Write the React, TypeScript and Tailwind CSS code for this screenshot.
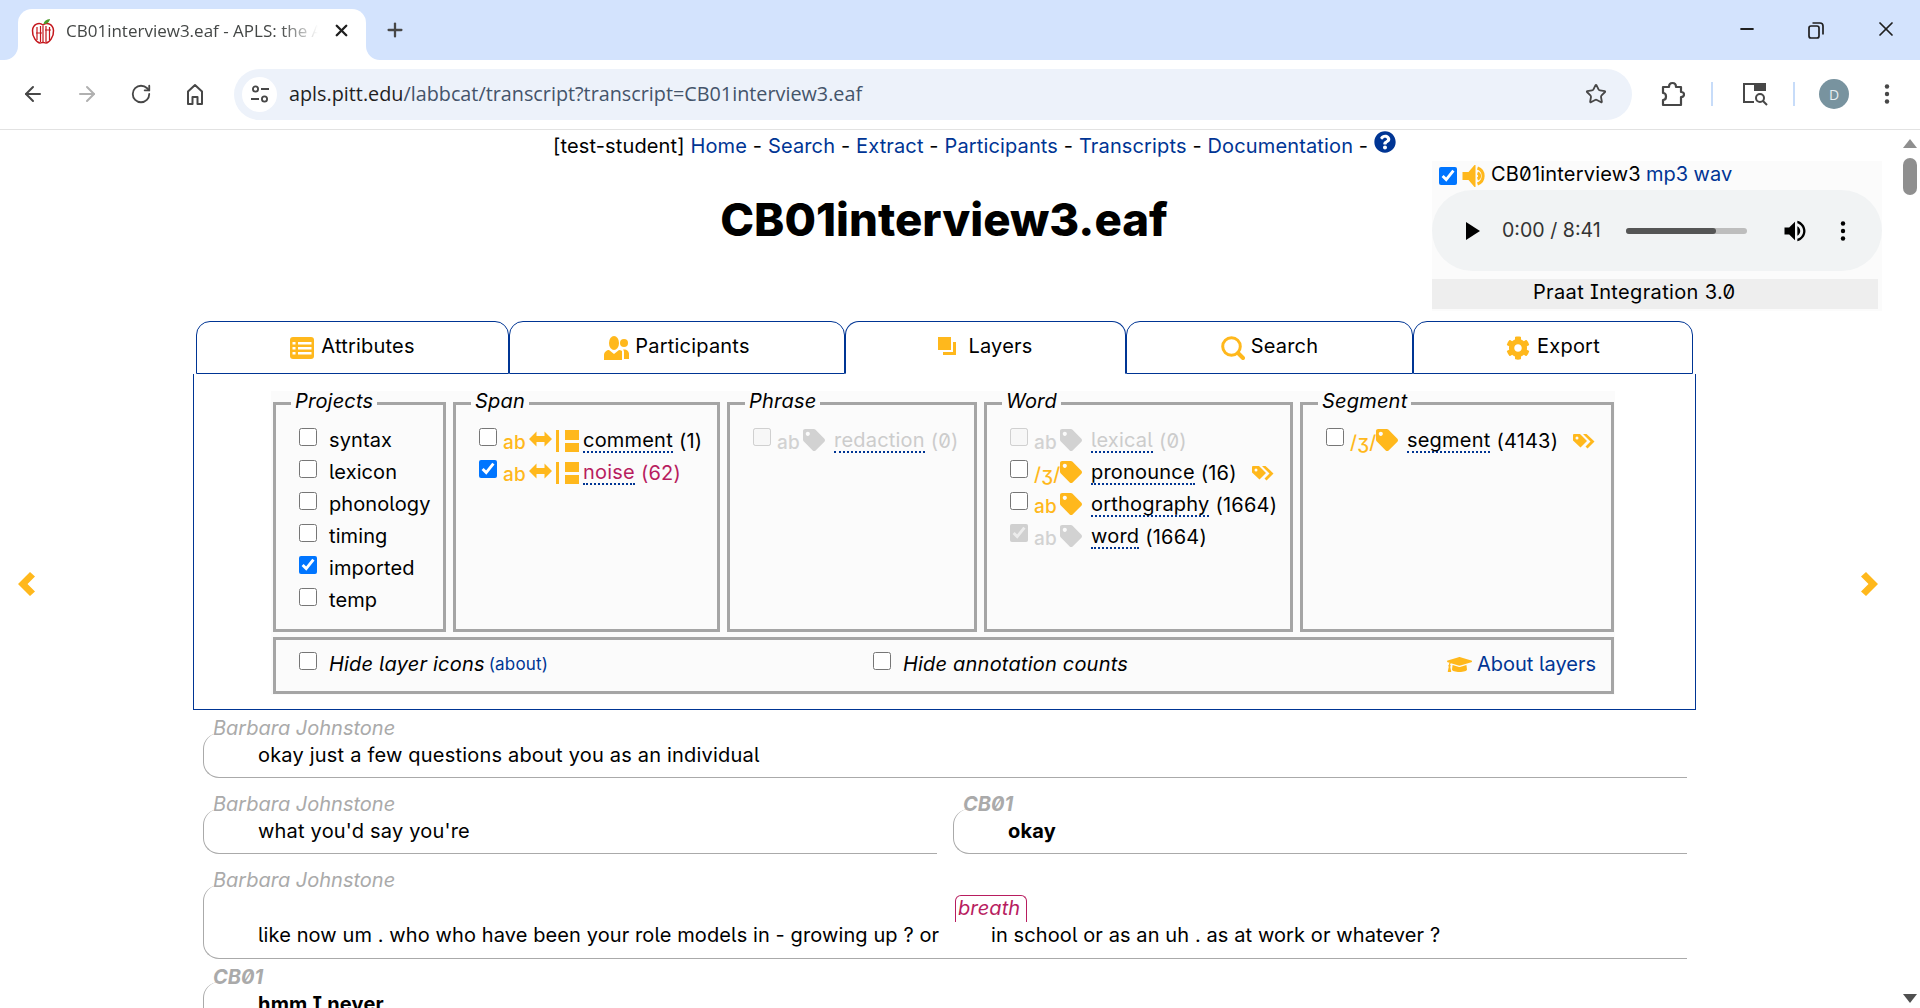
import { ArrowLeft, ArrowRight, Minus, Plus, RotateCw, Star, X } from "lucide-react";
import { FaCog, FaGraduationCap, FaQuestionCircle, FaTag } from "react-icons/fa";
import type { ReactNode } from "react";

const chromeFont = "font-['Open_Sans',sans-serif]";

function Dots({ className }: { className: string }) {
  return (
    <svg width="6" height="24" viewBox="0 0 6 24" className={className}>
      <circle cx="3" cy="4.5" r="2.2" />
      <circle cx="3" cy="12" r="2.2" />
      <circle cx="3" cy="19.5" r="2.2" />
    </svg>
  );
}

function Favicon() {
  return (
    <svg width="24" height="26" viewBox="0 0 24 26" fill="none" stroke="#c4161c" strokeWidth="1.5">
      <path d="M12 7C8 4 2 6 1.5 12.5 1 19 6 25 9 25c1.5 0 2-.6 3-.6s1.500.6 3 .6c3 0 8-6 7.500-12.500C22 6 16 4 12 7Z" />
      <path d="M6 9v13M9.500 8v16M12 8v16M15 8v16M18.500 9v13M5 15h6M14 12h6" strokeWidth="1.200" />
      <path d="M12.500 6C13 3 15.500 1.500 19 1c-.5 3-3 5-6.500 5Z" fill="#4c9a2a" stroke="none" />
    </svg>
  );
}

function BrowserChrome() {
  return (
    <div className={`shrink-0 ${chromeFont}`}>
      <div className="flex h-[60px] bg-[#d3e3fd]">
        <div className="relative ml-[18px] mt-[9px] flex h-[51px] w-[348px] rounded-t-[14px] bg-white">
          <svg width="14" height="14" viewBox="0 0 14 14" className="absolute bottom-0 left-[-14px]" fill="#fff">
            <path d="M14 0V14H0A14 14 0 0 0 14 0Z" />
          </svg>
          <svg width="14" height="14" viewBox="0 0 14 14" className="absolute bottom-0 right-[-14px]" fill="#fff">
            <path d="M0 0V14H14A14 14 0 0 1 0 0Z" />
          </svg>
          <div className="ml-[13px] mt-[9px] h-[26px]">
            <Favicon />
          </div>
          <div className="ml-[11px] mt-[11px] w-[252px] overflow-hidden whitespace-nowrap text-[17px] leading-[22px] text-[#444746] [mask-image:linear-gradient(to_right,black_85%,transparent)]">
            CB01interview3.eaf - APLS: the Archive
          </div>
          <X size={19} strokeWidth={3} className="ml-[14px] mt-[12px] text-[#1f1f1f]" />
        </div>
        <Plus size={22} strokeWidth={2.5} className="ml-[18px] mt-[19px] text-[#474747]" />
        <div className="ml-auto flex">
          <Minus size={20} strokeWidth={2.500} className="mr-[50px] mt-[19px] text-[#1f1f1f]" />
          <svg width="18" height="18" viewBox="0 0 18 18" fill="none" stroke="#1f1f1f" strokeWidth="1.700" className="mr-[49px] mt-[21px]">
            <rect x="2" y="5" width="10" height="12" rx="2" />
            <path d="M5.500 2H13a3 3 0 0 1 3 3v8.500" />
          </svg>
          <X size={24} strokeWidth={1.700} className="mr-[22px] mt-[17px] text-[#1f1f1f]" />
        </div>
      </div>
      <div className="flex h-[70px] items-center rounded-tl-[12px] rounded-tr-[12px] border-b border-[#e2e2e2] bg-white pb-[1px] pl-[6px] text-[#474747]">
        <div className="flex w-[54px] justify-center"><ArrowLeft size={24} strokeWidth={2} /></div>
        <div className="flex w-[54px] justify-center"><ArrowRight size={24} strokeWidth={2} className="text-[#b0b0b0]" /></div>
        <div className="flex w-[54px] justify-center"><RotateCw size={22} strokeWidth={2} /></div>
        <div className="flex w-[54px] justify-center">
          <svg width="24" height="24" viewBox="0 0 24 24" fill="none" stroke="#474747" strokeWidth="2" strokeLinejoin="round">
            <path d="M5 22V9.500L12 3l7 6.500V22h-4.500v-7h-5v7Z" />
          </svg>
        </div>
        <div className="ml-[12px] flex h-[51px] w-[1398px] items-center rounded-full bg-[#edf2fa]">
          <div className="ml-[8px] flex h-[35px] w-[35px] items-center justify-center rounded-full bg-white">
            <svg width="20" height="20" viewBox="0 0 20 20" fill="none" stroke="#474747" strokeWidth="1.800">
              <circle cx="5.500" cy="5" r="2.600" />
              <path d="M11 5h8M1 15h8" />
              <circle cx="14.500" cy="15" r="2.600" />
            </svg>
          </div>
          <div className="ml-[12px] whitespace-nowrap text-[19.8px] text-[#1f1f1f]">
            apls.pitt.edu<span className="text-[#44546a]">/labbcat/transcript?transcript=CB01interview3.eaf</span>
          </div>
          <Star size={22} strokeWidth={2} className="ml-auto mr-[25px]" />
        </div>
        <svg width="24" height="26" viewBox="0 0 24 26" fill="none" stroke="#474747" strokeWidth="2.200" strokeLinejoin="round" className="ml-[29px]">
          <path d="M2 6h6c0-2.500 1.300-4 3.500-4S15 3.500 15 6h5v5c2 0 3 1 3 2.500S22 16 20 16v8H2v-5c2 0 3-1.500 3-3.500S4 12 2 12Z" />
        </svg>
        <div className="ml-[26px] h-[24px] w-[2px] bg-[#c7dcf9]" />
        <svg width="26" height="26" viewBox="0 0 26 26" fill="none" stroke="#474747" strokeWidth="2" className="ml-[29px]">
          <path d="M12 21H2V3h21v7" />
          <path d="M13 3h10v6H13Z" fill="#474747" />
          <circle cx="18" cy="17" r="4" />
          <path d="m21 20 4 4" />
        </svg>
        <div className="ml-[25px] h-[24px] w-[2px] bg-[#c7dcf9]" />
        <div className="ml-[24px] flex h-[30px] w-[30px] items-center justify-center rounded-full bg-[#78939f] text-[14px] text-[#e6eef2]">D</div>
        <Dots className="ml-[35px] fill-[#474747]" />
      </div>
    </div>
  );
}

function NavLink({ children }: { children: ReactNode }) {
  return <span className="text-[#003594]">{children}</span>;
}

function TopNav() {
  return (
    <div className="flex h-[30px] items-center whitespace-nowrap pl-[553px] pt-[1px] text-[20px] tracking-[0.14px]">
      <span>
        [test-student] <NavLink>Home</NavLink> - <NavLink>Search</NavLink> - <NavLink>Extract</NavLink> -{" "}
        <NavLink>Participants</NavLink> - <NavLink>Transcripts</NavLink> - <NavLink>Documentation</NavLink> -
      </span>
      <FaQuestionCircle size={22} className="mb-[8px] ml-[6px] text-[#003594]" />
    </div>
  );
}

function AudioPanel() {
  return (
    <div className="absolute left-[1432px] top-[31px] w-[450px] bg-[#fbfbfb] pb-[2px] text-[20px]">
      <div className="flex h-[29px] items-center pb-[4px] pl-[7px]">
        <input type="checkbox" checked readOnly className="mt-[4px] h-[18px] w-[18px] accent-[#0075ff]" />
        <svg width="26" height="24" viewBox="0 0 25 24" className="ml-[5px] mt-[4px]">
          <path d="M0 8h6l6-7h1v22h-1l-6-7H0Z" fill="#ffb81c" />
          <path d="M15 4a8.500 8.500 0 0 1 0 16M15 9a3.200 3.200 0 0 1 0 6" fill="none" stroke="#ffb81c" strokeWidth="3" />
        </svg>
        <span className="ml-[3px]">CB01interview3</span>
        <span className="ml-[5px] tracking-normal text-[#003594]">mp3 wav</span>
      </div>
      <div className="flex h-[81px] items-center rounded-full bg-[#f1f3f4] text-[#333]">
        <svg width="18" height="20" viewBox="0 0 18 20" className="ml-[32px]">
          <path d="M2 1 16 10 2 19Z" fill="#000" />
        </svg>
        <span className="ml-[20px] whitespace-nowrap text-[19.6px] tracking-normal [font-feature-settings:normal]">0:00 / 8:41</span>
        <div className="ml-[25px] h-[6px] w-[121px] rounded-full bg-[#bdbdbd]">
          <div className="h-[6px] w-[90px] rounded-full bg-[#555]" />
        </div>
        <svg width="28" height="28" viewBox="0 0 24 24" className="ml-[34px] fill-black">
          <path d="M3 9v6h4l5 5V4L7 9H3zm13.500 3c0-1.770-1.020-3.290-2.500-4.030v8.050c1.480-.73 2.500-2.250 2.500-4.020zM14 3.230v2.060c2.890.86 5 3.540 5 6.710s-2.110 5.850-5 6.710v2.060c4.010-.91 7-4.490 7-8.770s-2.990-7.860-7-8.770z" />
        </svg>
        <Dots className="ml-[31px] fill-black" />
      </div>
      <div className="mt-[8px] flex h-[30px] w-[446px] items-center bg-[#eeeeee] pb-[5px] pl-[101px] tracking-[0.35px]">Praat Integration 3.0</div>
    </div>
  );
}

function TableIcon() {
  return (
    <svg width="24" height="22" viewBox="0 0 24 22">
      <rect width="24" height="22" rx="3" fill="#ffb81c" />
      <path d="M2.500 5h3v2.500h-3zM2.500 10h3v2.500h-3zM2.500 15h3v2.500h-3zM8 5h13.500v2.500H8zM8 10h13.500v2.500H8zM8 15h13.500v2.500H8z" fill="#fff" />
    </svg>
  );
}

function PeopleIcon() {
  return (
    <svg width="25" height="24" viewBox="0 0 25 24" fill="#ffb81c">
      <ellipse cx="10" cy="7" rx="5" ry="7" />
      <path d="M0 24v-5c0-3 3-5 5-5l5 4 5-4c1 0 2 .5 3 1v9Z" />
      <circle cx="20" cy="7" r="4" />
      <path d="M20 13.500c3 0 5 2 5 4.500v5h-5v-7c0-1-.5-2-1-2.500Z" />
    </svg>
  );
}

function LayersIcon() {
  return (
    <svg width="18" height="18" viewBox="0 0 18 18" fill="#ffb81c">
      <rect width="13" height="13" />
      <path d="M15 5h3v13H5v-3h10z" />
    </svg>
  );
}

function SearchIcon() {
  return (
    <svg width="24" height="24" viewBox="0 0 24 24" fill="none" stroke="#ffb81c">
      <circle cx="10.500" cy="10.500" r="8.800" strokeWidth="3" />
      <path d="m17 17 5 5" strokeWidth="4" strokeLinecap="round" />
    </svg>
  );
}

const tabs = [
  { label: "Attributes", icon: <TableIcon />, width: "w-[313px]", gap: "gap-[7px]", shift: "mt-[3px]" },
  { label: "Participants", icon: <PeopleIcon />, width: "w-[336px]", gap: "gap-[6px]", shift: "mt-[3px]" },
  { label: "Layers", icon: <LayersIcon />, width: "w-[281px]", gap: "gap-[12px]", shift: "", active: true },
  { label: "Search", icon: <SearchIcon />, width: "w-[287px]", gap: "gap-[6px]", shift: "mt-[3px]" },
  { label: "Export", icon: <FaCog size={24} className="text-[#ffb81c]" />, width: "w-[280px]", gap: "gap-[7px]", shift: "mt-[3px]" },
];

function Tabs() {
  return (
    <div className="ml-[196px] flex">
      {tabs.map((tab) => (
        <div
          key={tab.label}
          className={`flex h-[53px] items-center justify-center rounded-t-[14px] border-x-[1.5px] border-t-[1.5px] border-[#003594] pb-[3px] text-[20px] ${tab.gap} ${tab.width} ${
            tab.active ? "border-b-[1.5px] border-b-white" : "border-b-[1.5px]"
          }`}
        >
          <span className={tab.shift}>{tab.icon}</span>
          {tab.label}
        </div>
      ))}
    </div>
  );
}

function SpanIcons() {
  return (
    <>
      <svg width="23" height="16" viewBox="0 0 23 16" fill="currentColor" className="ml-[4px] mt-[-4px]">
        <path d="M0 8 7.500 .5V5h8V.5L23 8l-7.500 7.500V11h-8v4.500Z" />
      </svg>
      <span className="ml-[4px] h-[22px] w-[3px] bg-[#ffb81c]" />
      <span className="ml-[6px] flex h-[22px] w-[14px] flex-col justify-between">
        <span className="h-[10px] bg-[#ffb81c]" />
        <span className="h-[9px] bg-[#ffb81c]" />
      </span>
    </>
  );
}

function PairedTags() {
  return (
    <svg width="23" height="16" viewBox="0 0 23 16" fill="#ffb81c" className="ml-[14px] mb-[1px]">
      <path d="M1 2a1 1 0 0 1 1-1h6l7 7-6.500 6.500L1 7.500Z" />
      <circle cx="5" cy="5" r="1.500" fill="#fbfbfb" />
      <path d="M11 1h3.500l8 7.500-7 7-2-2 5-5Z" />
    </svg>
  );
}

interface LayerRowProps {
  marker?: string;
  kind?: "span" | "tag";
  label: string;
  count: string;
  checked?: boolean;
  off?: boolean;
  dimIcons?: boolean;
  pink?: boolean;
  paired?: boolean;
}

function LayerRow({ marker = "ab", kind = "tag", label, count, checked, off, dimIcons, pink, paired }: LayerRowProps) {
  const textColor = off ? "text-[#cccccc]" : pink ? "text-[#b81d5f]" : "text-black";
  const iconColor = off || dimIcons ? "text-[#d2d2d2]" : "text-[#ffb81c]";
  return (
    <div className={`flex h-[32px] items-center whitespace-nowrap text-[20px] ${textColor}`}>
      <input type="checkbox" checked={checked} disabled={off || dimIcons} readOnly className="mb-[8px] h-[18px] w-[18px] shrink-0 accent-[#0075ff]" />
      <div className={`flex items-center ${iconColor}`}>
        <span className="ml-[6px] mt-[5px] w-[22px] text-[19px] font-medium">{marker}</span>
        {kind === "span" ? <SpanIcons /> : <FaTag size={22} className="ml-[4px] mt-[-2px]" />}
      </div>
      <span className={`${kind === "span" ? "ml-[4px]" : "ml-[9px]"} border-b-2 border-dotted border-[#003594] leading-[21px]`}>{label}</span>
      <span className="ml-[6px] mb-[1px]">({count})</span>
      {paired && <PairedTags />}
    </div>
  );
}

function Group({ title, children }: { title: string; children: ReactNode }) {
  return (
    <fieldset className="h-[241px] min-w-0 border-[3px] border-[#a5a5a5] pl-[23px]">
      <legend className="ml-[-8px] h-[24px] px-[4px] text-[20px] italic leading-[21px]">{title}</legend>
      <div className="pt-[10px]">{children}</div>
    </fieldset>
  );
}

function LayersPanel() {
  return (
    <div className="ml-[193px] h-[336px] w-[1503px] border-x-[1.5px] border-b-[1.5px] border-[#003594] pt-[17px]">
      <div className="ml-[77px] w-[1344px] bg-[#fbfbfb] pb-[1px] pl-[2px]">
        <div className="grid grid-cols-[173px_267px_250px_309px_314px] gap-[7px]">
          <Group title="Projects">
            <div className="-mt-[1px] tracking-[0.1px]">
              {["syntax", "lexicon", "phonology", "timing", "imported", "temp"].map((project) => (
                <label key={project} className="flex h-[32px] items-center text-[20px]">
                  <input type="checkbox" checked={project === "imported"} readOnly className="mb-[6px] h-[18px] w-[18px] accent-[#0075ff]" />
                  <span className="ml-[12px]">{project}</span>
                </label>
              ))}
            </div>
          </Group>
          <Group title="Span">
            <LayerRow kind="span" label="comment" count="1" />
            <LayerRow kind="span" label="noise" count="62" checked pink />
          </Group>
          <Group title="Phrase">
            <LayerRow label="redaction" count="0" off />
          </Group>
          <Group title="Word">
            <LayerRow label="lexical" count="0" off />
            <LayerRow marker="/ʒ/" label="pronounce" count="16" paired />
            <LayerRow label="orthography" count="1664" />
            <LayerRow label="word" count="1664" checked dimIcons />
          </Group>
          <Group title="Segment">
            <LayerRow marker="/ʒ/" label="segment" count="4143" paired />
          </Group>
        </div>
        <div className="mt-[5px] flex h-[57px] w-[1341px] items-center border-[3px] border-[#a5a5a5] pb-[4px] pl-[23px] pr-[15px] text-[20px]">
          <div className="flex w-[574px] items-center">
            <input type="checkbox" readOnly className="mb-[6px] h-[18px] w-[18px]" />
            <span className="ml-[12px] italic">Hide layer icons</span>
            <span className="ml-[4px] mt-[2px] text-[17px] text-[#003594]">(about)</span>
          </div>
          <input type="checkbox" readOnly className="mb-[6px] h-[18px] w-[18px]" />
          <span className="ml-[12px] italic">Hide annotation counts</span>
          <span className="ml-auto flex items-center gap-[5px] tracking-normal text-[#003594]">
            <FaGraduationCap size={25} className="mt-[2px] text-[#ffb81c]" />
            About layers
          </span>
        </div>
      </div>
    </div>
  );
}

function Speaker({ name, bold }: { name: string; bold?: boolean }) {
  return (
    <div className={`h-[24px] pl-[10px] text-[20px] italic leading-[24px] tracking-normal text-[#aaaaaa] ${bold ? "font-bold" : ""}`}>
      {name}
    </div>
  );
}

function Turn({ name, bold, text }: { name: string; bold?: boolean; text: string }) {
  return (
    <div className="w-full">
      <Speaker name={name} bold={bold} />
      <div className="relative z-[-1] -mt-[7px] h-[45px] rounded-l-[16px] border-b-[1.5px] border-l-[1.5px] border-[#aaaaaa] pl-[54px] pt-[10px] text-[20px] leading-[24px]">
        <span className={bold ? "font-bold" : ""}>{text}</span>
      </div>
    </div>
  );
}

function Transcript() {
  return (
    <div className="relative z-0 ml-[203px] w-[1484px]">
      <div className="mt-[6px]">
        <Turn name="Barbara Johnstone" text="okay just a few questions about you as an individual" />
      </div>
      <div className="mt-[14px] flex gap-[16px]">
        <div className="w-[734px]">
          <Turn name="Barbara Johnstone" text="what you'd say you're" />
        </div>
        <div className="w-[734px]">
          <Turn name="CB01" bold text="okay" />
        </div>
      </div>
      <div className="mt-[14px]">
        <Speaker name="Barbara Johnstone" />
        <div className="relative z-[-1] -mt-[7px] flex h-[74px] items-end rounded-l-[16px] border-b-[1.5px] border-l-[1.5px] border-[#aaaaaa] pb-[11px] pl-[54px] text-[20px] leading-[24px] tracking-[0.1px]">
          <span className="w-[697px] whitespace-nowrap">like now um . who who have been your role models in - growing up ? or</span>
          <div>
            <div className="mb-[1px] h-[27px] w-[72px] rounded-t-[6px] border-x border-t border-[#b81d5f] pl-[2px] italic leading-[25px] text-[#b81d5f]">breath</div>
            <div className="whitespace-nowrap pl-[36px]">in school or as an uh . as at work or whatever ?</div>
          </div>
        </div>
      </div>
      <div className="mt-[6px]">
        <Turn name="CB01" bold text="hmm I never" />
      </div>
    </div>
  );
}

function Chevron({ flip }: { flip?: boolean }) {
  return (
    <svg width="17" height="24" viewBox="0 0 17 24" fill="#ffb81c" className={flip ? "rotate-180" : ""}>
      <path d="M5 0 17 12 5 24 0 19.500 7.500 12 0 4.500Z" />
    </svg>
  );
}

function Scrollbar() {
  return (
    <div className="flex w-[20px] shrink-0 flex-col items-center pt-[9px]">
      <svg width="14" height="9" viewBox="0 0 14 9">
        <path d="M7 0 14 9H0Z" fill="#8f8f8f" />
      </svg>
      <div className="mt-[10px] h-[37px] w-[14px] rounded-full bg-[#8f8f8f]" />
      <svg width="14" height="9" viewBox="0 0 14 9" className="mt-auto mb-[5px]">
        <path d="M0 0H14L7 9Z" fill="#505050" />
      </svg>
    </div>
  );
}

export default function App() {
  return (
    <div className="flex h-[1008px] w-[1920px] flex-col overflow-hidden bg-white font-['Inter',sans-serif] text-black">
      <BrowserChrome />
      <div className="flex min-h-0 flex-1">
        <div className="relative min-w-0 flex-1 overflow-hidden tracking-[0.2px] [font-feature-settings:'ss02']">
          <TopNav />
          <h1 className="mt-[34px] w-[1888px] text-center text-[45.6px] font-extrabold leading-[52px] tracking-normal [font-feature-settings:normal]">CB01interview3.eaf</h1>
          <div className="h-[75px]" />
          <Tabs />
          <LayersPanel />
          <Transcript />
          <AudioPanel />
          <div className="absolute left-[18px] top-[442px]"><Chevron flip /></div>
          <div className="absolute left-[1861px] top-[442px]"><Chevron /></div>
        </div>
        <Scrollbar />
      </div>
    </div>
  );
}
